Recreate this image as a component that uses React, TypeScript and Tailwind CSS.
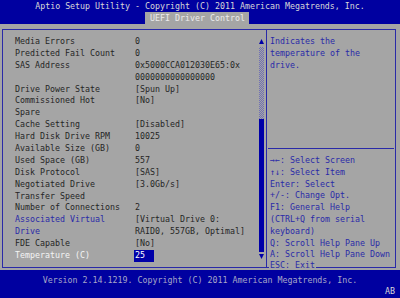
import React from "react";

type Row = { l: string; v: string; blueLabel?: boolean; sel?: boolean };

const rows: Row[] = [
  { l: "Media Errors", v: "0" },
  { l: "Predicted Fail Count", v: "0" },
  { l: "SAS Address", v: "0x5000CCA012030E65:0x" },
  { l: "", v: "0000000000000000" },
  { l: "Drive Power State", v: "[Spun Up]" },
  { l: "Commissioned Hot", v: "[No]" },
  { l: "Spare", v: "" },
  { l: "Cache Setting", v: "[Disabled]" },
  { l: "Hard Disk Drive RPM", v: "10025" },
  { l: "Available Size (GB)", v: "0" },
  { l: "Used Space (GB)", v: "557" },
  { l: "Disk Protocol", v: "[SAS]" },
  { l: "Negotiated Drive", v: "[3.0Gb/s]" },
  { l: "Transfer Speed", v: "" },
  { l: "Number of Connections", v: "2" },
  { l: "Associated Virtual", v: "[Virtual Drive 0:", blueLabel: true },
  { l: "Drive", v: "RAID0, 557GB, Optimal]", blueLabel: true },
  { l: "FDE Capable", v: "[No]" },
  { l: "Temperature (C)", v: "25", sel: true },
];

const helpBottom = [
  "→←: Select Screen",
  "↑↓: Select Item",
  "Enter: Select",
  "+/-: Change Opt.",
  "F1: General Help",
  "(CTRL+Q from serial",
  "keyboard)",
  "Q: Scroll Help Pane Up",
  "A: Scroll Help Pane Down",
];

export default function App() {
  return (
    <div className="w-[400px] h-[298px] overflow-hidden bg-[#a5a5a5] flex flex-col font-['DejaVu_Sans_Mono','Liberation_Mono',monospace] text-[8.3px] whitespace-pre">
      <div className="h-[24px] bg-[#0000a0] flex flex-col shrink-0">
        <div className="h-[12px] leading-[12px] text-center text-[#d8d8d8]">
          Aptio Setup Utility - Copyright (C) 2011 American Megatrends, Inc.
        </div>
        <div className="h-[12px] flex">
          <div className="ml-[145px] w-[104px] bg-[#a5a5a5] text-[#ececec] leading-[12px] pl-[5px]">
            UEFI Driver Control
          </div>
        </div>
      </div>

      <div className="flex-1 pt-[5px] pl-[2px] pr-[4px] pb-[2px] min-h-0">
        <div className="relative h-full border border-[#2a2aa8] flex">
          <div className="w-[263px] flex">
            <div className="w-[256px] pt-[6px] pl-[12px] flex flex-col">
              {rows.map((r, i) => (
                <div key={i} className="h-[11.9px] leading-[11.9px] flex">
                  <div
                    className={
                      "w-[120px] " +
                      (r.sel
                        ? "text-[#f4f4f4]"
                        : r.blueLabel
                        ? "text-[#2a2aa8]"
                        : "text-[#262626]")
                    }
                  >
                    {r.l}
                  </div>
                  {r.sel ? (
                    <div className="ml-[-1px] w-[20px] h-[12px] bg-[#0000a8] text-white pl-[1px]">
                      {r.v}
                    </div>
                  ) : (
                    <div className="text-[#262626]">{r.v}</div>
                  )}
                </div>
              ))}
            </div>
            <div className="w-[5px] pt-[9px] pb-[8px] flex flex-col items-center">
              <svg width="5" height="5" viewBox="0 0 5 5" className="shrink-0">
                <polygon points="2.5,0 5,5 0,5" fill="#0000a8" />
              </svg>
              <div className="mt-[3px] h-[72px] w-[5px] bg-[repeating-conic-gradient(#7070b4_0_25%,#a5a5a5_0_50%)] bg-[length:2px_2px]" />
              <div className="flex-1 w-[5px] bg-[#0000a8]" />
              <svg width="5" height="5" viewBox="0 0 5 5" className="shrink-0 mt-[2px]">
                <polygon points="0,0 5,0 2.5,5" fill="#0000a8" />
              </svg>
            </div>
          </div>

          <div className="flex-1 border-l border-[#2a2aa8] flex flex-col text-[#2a2aa8]">
            <div className="h-[118px] pt-[6px] pl-[3px] flex flex-col">
              {["Indicates the", "temperature of the", "drive."].map((t, i) => (
                <div key={i} className="h-[11.9px] leading-[11.9px]">
                  {t}
                </div>
              ))}
            </div>
            <div className="h-[1px] mx-[1px] bg-[#2a2aa8]" />
            <div className="pt-[6px] pl-[3px] flex flex-col">
              {helpBottom.map((t, i) => (
                <div key={i} className="h-[11.8px] leading-[11.8px]">
                  {t}
                </div>
              ))}
            </div>
          </div>
          <div className="absolute left-[266px] bottom-[-2px] h-[7px] leading-[7px] pl-[1px] pr-[1px] bg-[#a5a5a5] text-[#2a2aa8]">
            ESC: Exit
          </div>
        </div>
      </div>

      <div className="h-[28px] bg-[#0000a0] shrink-0 flex flex-col pt-[4px]">
        <div className="h-[12px] leading-[12px] text-center text-[#a8a8c8]">
          Version 2.14.1219. Copyright (C) 2011 American Megatrends, Inc.
        </div>
        <div className="h-[10px] leading-[10px] text-right pr-[5px] text-[#d8d8d8]">AB</div>
      </div>
    </div>
  );
}
